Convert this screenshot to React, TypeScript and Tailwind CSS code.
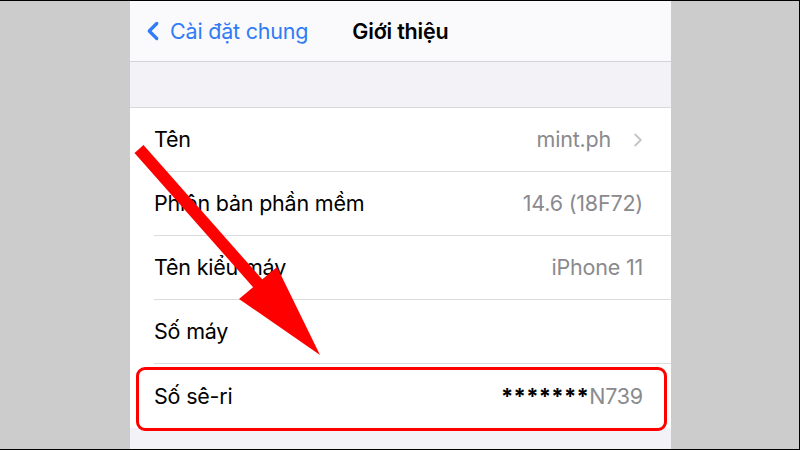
import { ChevronLeft, ChevronRight } from "lucide-react";

type Row = {
  label: string;
  value?: string;
  chevron?: boolean;
  serial?: boolean;
};

const rows: Row[] = [
  { label: "Tên", value: "mint.ph", chevron: true },
  { label: "Phiên bản phần mềm", value: "14.6 (18F72)" },
  { label: "Tên kiểu máy", value: "iPhone 11" },
  { label: "Số máy" },
  { label: "Số sê-ri", serial: true },
];

export default function App() {
  return (
    <div
      className="relative w-[800px] h-[450px] overflow-hidden bg-[#cccccc] border-t border-r border-b border-black flex"
      style={{ fontFamily: "Inter, 'Noto Sans', sans-serif" }}
    >
      {/* phone screen */}
      <div className="w-[541px] ml-[130px] flex flex-col bg-[#f2f2f7]">
        {/* nav bar */}
        <div className="h-[61px] shrink-0 flex items-center bg-[#fafafc] border-b border-[#d4d4d8]">
          <div className="flex items-center pl-[8px] text-[#2f7cf6]">
            <ChevronLeft size={30} strokeWidth={2.6} />
            <span className="ml-[2px] text-[21.5px] tracking-[-0.2px]">Cài đặt chung</span>
          </div>
          <span className="ml-[44px] text-[21.5px] font-semibold text-black tracking-[-0.2px]">
            Giới thiệu
          </span>
        </div>

        {/* spacer band */}
        <div className="h-[46px] shrink-0 bg-[#f2f2f7] border-b border-[#d8d8dc]" />

        {/* list */}
        <div className="bg-white">
          {rows.map((r, i) => (
            <div key={r.label} className="pl-[24px] h-[64px] flex flex-col">
              <div className="flex-1 flex items-center pr-[28px] text-[21.5px] tracking-[-0.2px]">
                <span className="text-black">{r.label}</span>
                <div className="ml-auto flex items-center text-[#8a8a8e]">
                  {r.serial ? (
                    <>
                      <span className="text-black font-bold text-[22px] tracking-[0.3px]">*******</span>
                      <span>N739</span>
                    </>
                  ) : (
                    <span>{r.value}</span>
                  )}
                  {r.chevron && (
                    <ChevronRight size={22} strokeWidth={2} className="ml-[16px] mr-[-6px] text-[#c4c4c7]" />
                  )}
                </div>
              </div>
              {i < rows.length - 1 && <div className="h-px bg-[#dcdce0]" />}
            </div>
          ))}
        </div>
      </div>

      {/* annotation: red box */}
      <div className="absolute left-[136px] top-[366px] w-[531px] h-[64px] border-[3px] border-[#ff0000] rounded-[9px]" />

      {/* annotation: red arrow */}
      <svg className="absolute left-0 top-0" width="800" height="450" viewBox="0 0 800 450">
        <line x1="139" y1="148" x2="268" y2="294" stroke="#ff0000" strokeWidth="12" />
        <polygon points="320,354 239,298 277,266" fill="#ff0000" />
      </svg>
    </div>
  );
}
